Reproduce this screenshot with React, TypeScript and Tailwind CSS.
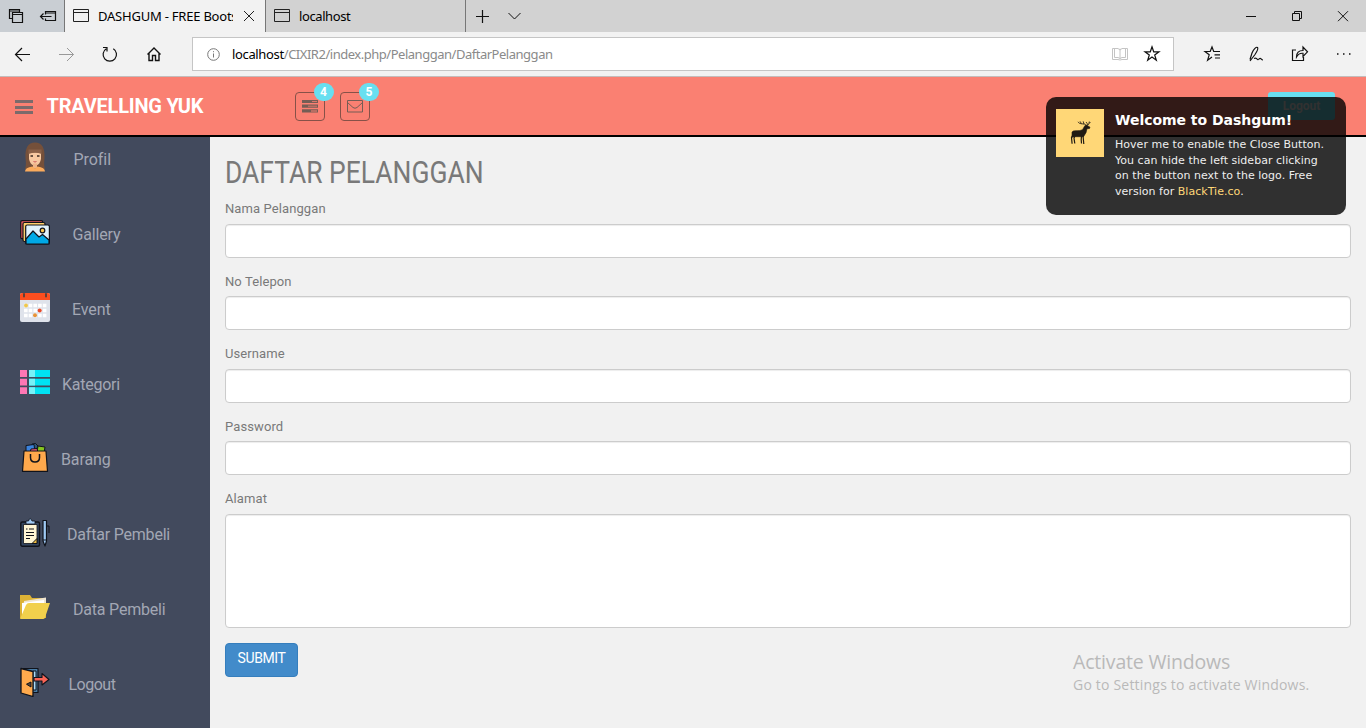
import React from "react";

const BackgroundTabs = () => (
  <svg width="64" height="32" viewBox="0 0 64 32" fill="none" stroke="#111" strokeWidth="1.200">
    <path d="M12.500 18.500h-3v-9h10v3M9.500 11h10" />
    <path d="M12.500 12.500h10v10h-10zM12.500 14.500h10" />
    <path d="M45.500 14.500v-3h10v9h-10v-2M45.500 13h10M40.500 16.500h11M43.500 13.500l-3 3 3 3" />
  </svg>
);

const PageIcon = () => (
  <svg width="17" height="14" viewBox="0 0 17 14" fill="none" stroke="#222">
    <path d="M.5.5h15v12H.5zM.5 3.500h15" />
  </svg>
);

const NewTabIcons = () => (
  <svg width="60" height="32" viewBox="0 0 60 32" fill="none" stroke="#111">
    <path d="M10 16.500h13M16.500 10v13" strokeWidth="1.200" />
    <path d="M42.500 13l6 6 6-6" />
  </svg>
);

const WindowControls = () => (
  <svg width="126" height="32" viewBox="0 0 126 32" fill="none" stroke="#111" className="ml-auto">
    <path d="M6 16.500h10" />
    <path d="M52.500 13.500h7v7h-7zM54.500 13.500v-2h7v7h-2" />
    <path d="M98 11.200l10 10M108 11.200l-10 10" />
  </svg>
);

const NavIcons = () => (
  <svg width="192" height="44" viewBox="0 0 192 44" fill="none" stroke="#111" strokeWidth="1.200">
    <path d="M30 22.500H15.500M22 16l-6.500 6.500L22 29" />
    <path d="M59 22.500h14.500M67 16l6.500 6.500L67 29" stroke="#999" strokeWidth="1" />
    <path d="M113.300 16.800a6.700 6.700 0 1 1-7 0M103 15.500h4v4" />
    <path d="M147.500 22.500l6.500-6.500 6.500 6.500M149 21.500v7h3.500v-5h3v5h3.500v-7" strokeWidth="1.400" />
  </svg>
);

const STAR = "M0-7.200l1.700 5h5.300l-4.300 3.200 1.600 5.200L0 3l-4.300 3.200 1.600-5.200L-7-2.200h5.300z";

const AddressIcons = () => (
  <svg width="54" height="34" viewBox="0 0 54 34" fill="none">
    <path d="M8 11.500v10M.5 11.500H6L8 13l2-1.500h5.500v11H10L8 23l-2-.5H.5zM2.500 20.500H6l2 1 2-1h3.500v-9M2.500 11.500v9" stroke="#c4c4c4" />
    <path d={STAR} transform="translate(40 17)" stroke="#111" strokeWidth="1.200" />
  </svg>
);

const ToolbarIcons = () => (
  <svg width="192" height="44" viewBox="0 0 192 44" fill="none" stroke="#111" strokeWidth="1.200">
    <path d="M44.500 19.500h-4.800L38 15l-1.800 4.500H31l4.200 3.300-1.600 5.400 4.400-3.200M40 19.500h6M40.500 22.800H46M41 26h5" />
    <path d="M76 27.500l2-6.500c1.500-4 4.500-6.500 5.500-5.500s-.5 4-2.500 7l-5 6.500M80 26.500c2-1 3 .2 3.500 1s2-1.500 3-1 1 1.500 2.500 1.500" />
    <path d="M122 18h-3.500v10.500h11V25M122.500 25c0-4.500 2.500-6.500 6.500-6.500V15l4.500 4.800-4.500 4.700v-3.200c-3-.3-5 1-6.500 3.700z" />
    <path d="M163 22h1.500M169 22h1.500M175 22h1.500" strokeWidth="1.500" />
  </svg>
);

const TasksIcon = () => (
  <svg width="16" height="13" viewBox="0 0 16 13">
    <path d="M0 0h16v3H0zM0 4.500h16v3.200H0zM0 9.300h16v3.200H0z" fill="#755d55" />
    <path d="M10 1.200h5v.8h-5zM6 5.700h9v.9H6zM9 10.500h6v.9H9z" fill="#fa8072" />
  </svg>
);

const MailIcon = () => (
  <svg width="16" height="13" viewBox="0 0 16 13" fill="none" stroke="#755d55">
    <path d="M.5.500h15v11.500H.5zM.5 2.500l5.500 5q2 1.500 4 0l5.500-5" />
  </svg>
);

const Woman = () => (
  <svg width="30" height="30" viewBox="0 0 30 30">
    <path d="M5 27Q6.500 23 5.500 16C5 6 8 .5 15 .5s10 5.500 9.500 15.500Q23.500 23 25 27z" fill="#75503a" />
    <path d="M9 10.500q2-.5 12 0v6.500q-1 5-4.500 6.500h-3Q10 22 9 17z" fill="#f7c9a1" />
    <path d="M8.500 12V7.500h13V12q-6-2.500-13 0z" fill="#8a6148" />
    <path d="M13 21.500h4v5h-4z" fill="#efb488" />
    <path d="M5 29.500q0-4 7.500-5l2.500 2 2.500-2q7.500 1 7.500 5z" fill="#fbab5c" />
    <path d="M10.500 14h2.500M17 14h2.500" stroke="#3a2a22" strokeWidth="1.500" />
    <path d="M13.500 19.500q1.500 1 3 0" stroke="#c55" fill="none" />
  </svg>
);

const Gallery = () => (
  <svg width="30" height="30" viewBox="0 0 30 30" stroke="#10131b" strokeWidth="1.200" strokeLinejoin="round">
    <rect x=".7" y="3.700" width="22" height="18" rx="1.500" fill="#e65a5f" />
    <rect x="3" y="5.500" width="22" height="19" rx="1.500" fill="#ffd06b" />
    <rect x="5.700" y="8" width="23.700" height="19" rx="1.500" fill="#e0f2fc" />
    <path d="M6 22l7-8 6 6 3.500-2.500L29 23v4H6z" fill="#00a9e6" />
    <circle cx="22.500" cy="13.500" r="2.300" fill="#ffc94f" />
  </svg>
);

const Calendar = () => (
  <svg width="30" height="30" viewBox="0 0 30 30">
    <rect y="1" width="30" height="29" rx="2" fill="#dfe3eb" />
    <path d="M0 3q0-2 2-2h26q2 0 2 2v5H0z" fill="#fc4e1f" />
    <path d="M4 2v2.500M26 2v2.500" stroke="#60403a" strokeWidth="2" strokeLinecap="round" />
    <path d="M4 13.500h22.500M4 18.500h22.500M4 23.500h22.500" stroke="#fff" strokeWidth="3.600" strokeDasharray="3.600 1.100" />
    <circle cx="6" cy="13.500" r="2" fill="#efc74d" />
    <circle cx="19.700" cy="18.500" r="2" fill="#e84c2b" />
    <circle cx="15" cy="23.300" r="2" fill="#e8943a" />
  </svg>
);

const ListBlocks = () => (
  <svg width="30" height="30" viewBox="0 0 30 30">
    <path d="M0 3h7v7H0zM0 11.800h7v6.700H0zM0 20.300h7V27H0z" fill="#ff77b4" />
    <path d="M9 3h21v7H9zM9 11.800h21v6.700H9zM9 20.300h21V27H9z" fill="#00e2f3" />
    <path d="M9 3h6v7H9zM9 11.800h6v6.700H9zM9 20.300h6V27H9z" fill="#77f1f7" />
  </svg>
);

const Bag = () => (
  <svg width="30" height="30" viewBox="0 0 30 30" stroke="#10131b" strokeLinejoin="round">
    <path d="M12 2q4-2 6 2l-2 5h-5z" fill="#2c5478" />
    <path d="M6 3.500l8-1 1 8H6z" fill="#3b82dc" />
    <path d="M18 4l7 1-1 6h-7z" fill="#85c51f" />
    <path d="M11 7l6-.5 1 4h-8z" fill="#ed5b75" />
    <path d="M4 9h22l1.500 20.300h-25z" fill="#ffa94c" strokeWidth="1.200" />
    <path d="M10.500 12v3.500q0 4.500 4.500 4.500t4.500-4.500V12" fill="none" strokeWidth="1.500" />
  </svg>
);

const Clipboard = () => (
  <svg width="30" height="30" viewBox="0 0 30 30" stroke="#10131b" strokeLinejoin="round">
    <rect x=".8" y="5" width="18.700" height="24.300" rx="1.500" fill="#34465f" strokeWidth="1.400" />
    <path d="M3.500 7.500h13.500v19H3.500z" fill="#fff6d4" strokeWidth=".8" />
    <path d="M6 7V4h2.500q1.500-5 3.500 0H15v3z" fill="#9fc9f3" strokeWidth=".8" />
    <path d="M6 12h1.500M9 12h5M6 15.500h8M6 18.500h8M6 21.500h4" strokeWidth="1.100" />
    <path d="M12 26.500l5-5v5z" fill="#eebc3d" />
    <path d="M23 3.500h3.500V24L25 29l-2-5z" fill="#9fc9f3" strokeWidth="1.200" />
    <path d="M27 9h2v7M23 23h3.500" fill="none" />
  </svg>
);

const Folder = () => (
  <svg width="30" height="30" viewBox="0 0 30 30">
    <path d="M0 3h10l2 3h14v20H0z" fill="#dcb236" />
    <path d="M4 9l22-3.500V22H4z" fill="#eee5d2" />
    <path d="M2 11l22-3v16H2z" fill="#fff" />
    <path d="M0 27L6 13q1-2 3-2h21l-5 14.500q-.5 1.500-2 1.500z" fill="#f1d04c" />
  </svg>
);

const Door = () => (
  <svg width="30" height="30" viewBox="0 0 30 30" stroke="#10131b" strokeLinejoin="round">
    <path d="M3 1.500h15v24H3z" fill="#487ca5" strokeWidth="1.200" />
    <path d="M13 4h3v19h-3z" fill="#a9dcfa" />
    <path d="M1 1.500l12 3v25L1 26z" fill="#ffaa4d" strokeWidth="1.300" />
    <path d="M11 15l-4.500 2.200L11 20z" fill="#54463a" />
    <path d="M14 10.500h8v-4l7 6-7 5.500v-4h-8z" fill="#fa6556" strokeWidth="1.100" />
  </svg>
);

const Deer = () => (
  <svg width="48" height="48" viewBox="0 0 48 48" className="shrink-0 bg-[#ffd777]" fill="none" stroke="#201a13">
    <path d="M16 23q1-1.500 4-1.300 4 .3 6.500-1l2.500-4.200 1.500-.5 3.500 2.200-.5 1.300-2.500.2-1 4-2.500 4H19l-3 .5z" fill="#201a13" strokeWidth=".6" />
    <path d="M17.500 25l-2 3.500.6 6.200M19.500 26l-1.500 3 .8 5.500M27 26.500l.8 8.500M25.500 27l-.3 3.500.3 4" strokeWidth="1.200" />
    <path d="M30.500 16.500q-1.500-2-5-1.700-2.500 0-3.500-2M25.500 14.800l-1.500-2.500M28 15.300l-.8-3M31.500 16.500q2-1.500 1.800-4M33 14.500l1.500-1.500M31.800 16q-.6-2-1.800-3" strokeWidth=".8" />
  </svg>
);

const menu = [
  { label: "Profil", icon: <Woman />, text: "pl-[23.500px] tracking-[-0.05px]" },
  { label: "Gallery", icon: <Gallery />, text: "pl-[22.500px] tracking-[-0.15px]" },
  { label: "Event", icon: <Calendar />, text: "pl-[22px] tracking-[-0.1px]" },
  { label: "Kategori", icon: <ListBlocks />, text: "pl-3 tracking-[-0.25px]" },
  { label: "Barang", icon: <Bag />, text: "pl-[11px] tracking-[-0.1px]" },
  { label: "Daftar Pembeli", icon: <Clipboard />, text: "pl-[17px] tracking-[-0.2px]" },
  { label: "Data Pembeli", icon: <Folder />, text: "pl-[23px] tracking-[-0.2px]" },
  { label: "Logout", icon: <Door />, text: "pl-[18.500px] tracking-[-0.5px]" },
];

const fields = ["Nama Pelanggan", "No Telepon", "Username", "Password"];

function BrowserChrome() {
  return (
    <div className="font-['Noto_Sans',sans-serif] text-black">
      <div className="flex h-8 bg-[#d2d2d2]">
        <div className="w-16 bg-[#c9ced3]"><BackgroundTabs /></div>
        <div className="flex w-[201px] items-center border-l border-[#777] bg-[#f2f2f2] pl-2">
          <PageIcon />
          <span className="mt-px ml-2 w-[135px] overflow-hidden text-[13px] tracking-[-0.22px] whitespace-nowrap">DASHGUM - FREE Boots</span>
          <svg width="12" height="12" viewBox="0 0 12 12" stroke="#222" className="ml-[10px]"><path d="M1 1l10 10M11 1L1 11" /></svg>
        </div>
        <div className="flex w-[201px] items-center border-x border-[#777] pl-2">
          <PageIcon />
          <span className="mt-px ml-2 text-[13px] tracking-[-0.4px]">localhost</span>
        </div>
        <NewTabIcons />
        <WindowControls />
      </div>
      <div className="flex h-[45px] border-b border-[#c4bcbb] bg-[#f2f2f2]">
        <NavIcons />
        <div className="mt-[5px] flex h-[34px] w-[982px] items-center border border-[#c5c5c5] bg-white pr-[7px] pl-[14px]">
          <svg width="13" height="13" viewBox="0 0 13 13" fill="none" stroke="#777"><circle cx="6.500" cy="6.500" r="5.800" /><path d="M6.500 5.500v4M6.500 3.200v1" /></svg>
          <span className="mt-px ml-3 text-[13px] tracking-[-0.48px] text-[#8a8a8a]"><span className="tracking-[-0.35px] text-black">localhost</span>/CIXIR2/index.php/Pelanggan/DaftarPelanggan</span>
          <span className="ml-auto"><AddressIcons /></span>
        </div>
        <ToolbarIcons />
      </div>
    </div>
  );
}

function Header() {
  return (
    <header className="flex h-[60px] items-start border-b-2 border-black bg-[#fa8072]">
      <div className="mt-[23px] ml-[15px] flex w-[18px] flex-col gap-[2.500px]">
        <i className="h-[3px] bg-[#7b6a6b]" /><i className="h-[3px] bg-[#7b6a6b]" /><i className="h-[3px] bg-[#7b6a6b]" />
      </div>
      <b className="mt-[14px] ml-[13.500px] w-[248.500px] text-[20px] leading-[30px] tracking-[-0.22px] text-white">TRAVELLING YUK</b>
      <div className="mt-[15px] flex gap-[15px]">
        <div className="relative flex h-[29px] w-[30px] items-center justify-center rounded-[4px] border border-[#875148]">
          <TasksIcon />
          <span className="absolute -top-[10px] left-[17.500px] flex h-[18px] w-5 items-center justify-center rounded-full bg-[#68dff0] text-[12px] font-bold text-white">4</span>
        </div>
        <div className="relative flex h-[29px] w-[30px] items-center justify-center rounded-[4px] border border-[#875148]">
          <MailIcon />
          <span className="absolute -top-[10px] left-[18px] flex h-[18px] w-5 items-center justify-center rounded-full bg-[#68dff0] text-[12px] font-bold text-white">5</span>
        </div>
      </div>
      <button className="mt-[15px] mr-[31px] ml-auto h-7 w-[67px] rounded-[3px] bg-[#68dff0] text-[12px] font-bold text-[#f2f2f2]">Logout</button>
    </header>
  );
}

function Toast() {
  return (
    <div className="absolute top-[97px] left-[1046px] flex h-[118px] w-[300px] gap-[11px] rounded-[10px] bg-black/80 px-[10px] pt-3 font-['DejaVu_Sans',sans-serif] text-[#eee]">
      <Deer />
      <div>
        <h4 className="mt-px text-[14px] leading-[21px] font-bold tracking-[-0.03px] whitespace-nowrap text-white">Welcome to Dashgum!</h4>
        <p className="mt-[6px] text-[11px] leading-[15.700px] tracking-[0.03px] whitespace-nowrap">
          Hover me to enable the Close Button.<br />
          You can hide the left sidebar clicking<br />
          on the button next to the logo. Free<br />
          version for <span className="text-[#ffd777]">BlackTie.co</span>.
        </p>
      </div>
    </div>
  );
}

export default function App() {
  return (
    <div className="relative flex h-[728px] w-[1366px] flex-col overflow-hidden bg-[#f1f1f1] font-[Roboto,sans-serif]">
      <BrowserChrome />
      <Header />
      <div className="flex min-h-0 flex-1">
        <aside className="flex w-[210px] shrink-0 flex-col gap-[31px] bg-[#424a5d]">
          {menu.map((m) => (
            <a key={m.label} className="flex h-11 items-center pl-5 text-[16px] text-[#a2a7b4]">
              <span className="mb-[4px] w-[30px]">{m.icon}</span>
              <span className="mt-[2px]"><span className={m.text}>{m.label}</span></span>
            </a>
          ))}
        </aside>
        <main className="flex-1 px-[15px] text-[#797979]">
          <h2 className="h-[63.100px] origin-left scale-x-[0.853] pt-[18px] text-[31px] leading-[36px] font-normal whitespace-nowrap">DAFTAR PELANGGAN</h2>
          {fields.map((f) => (
            <div key={f} className="mb-[15px]">
              <label className="mb-[5px] block text-[13px] leading-[18.570px] tracking-[0.1px]">{f}</label>
              <div className="h-[34px] rounded-[4px] border border-[#ccc] bg-white shadow-[inset_0_1px_1px_rgba(0,0,0,0.075)]" />
            </div>
          ))}
          <label className="mb-[5px] block text-[13px] leading-[18.570px] tracking-[0.1px]">Alamat</label>
          <div className="mb-[15px] h-[114px] rounded-[4px] border border-[#ccc] bg-white shadow-[inset_0_1px_1px_rgba(0,0,0,0.075)]" />
          <button className="h-[34px] w-[73px] rounded-[4px] border border-[#357ebd] bg-[#428bca] pb-[2px] text-[14px] tracking-[-0.4px] text-white">SUBMIT</button>
        </main>
      </div>
      <Toast />
      <div className="absolute top-[649px] left-[1073px] font-['Open_Sans',sans-serif] whitespace-nowrap text-[#b9b9b9]">
        <p className="text-[19.500px] leading-[26px] tracking-[-0.18px]">Activate Windows</p>
        <p className="text-[14px] leading-5 tracking-[0.2px]">Go to Settings to activate Windows.</p>
      </div>
    </div>
  );
}
